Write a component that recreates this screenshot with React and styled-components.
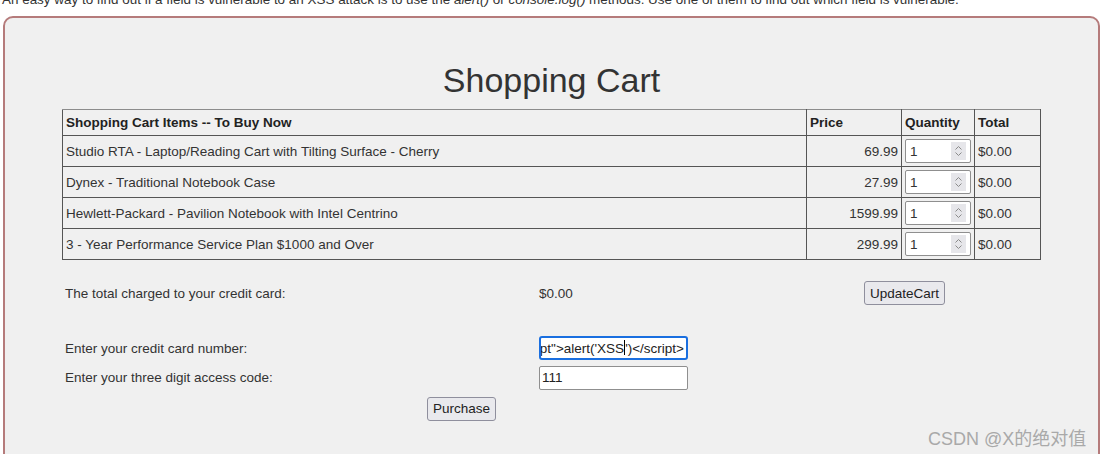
import React from "react";
import styled, { createGlobalStyle } from "styled-components";

const items = [
  { name: "Studio RTA - Laptop/Reading Cart with Tilting Surface - Cherry", price: "69.99" },
  { name: "Dynex - Traditional Notebook Case", price: "27.99" },
  { name: "Hewlett-Packard - Pavilion Notebook with Intel Centrino", price: "1599.99" },
  { name: "3 - Year Performance Service Plan $1000 and Over", price: "299.99" },
];

// spin buttons of a number input
const Spinner = () => (
  <SpinBox>
    <svg width="9" height="12" viewBox="0 0 9 12" fill="none" stroke="#8a8a8a" strokeWidth="1">
      <path d="M1.5 4.5 L4.5 1.5 L7.5 4.5" />
      <path d="M1.5 7.5 L4.5 10.5 L7.5 7.5" />
    </svg>
  </SpinBox>
);

const App = () => {
  return (
    <Page>
      <GlobalStyle />
      {/* Hint line, scrolled half out of view */}
      <Hint>
        An easy way to find out if a field is vulnerable to an XSS attack is to use the <em>alert()</em> or{" "}
        <em>console.log()</em> methods. Use one of them to find out which field is vulnerable.
      </Hint>

      <Panel>
        <Title>Shopping Cart</Title>

        <CartTable>
          <thead>
            <tr>
              <Th>Shopping Cart Items -- To Buy Now</Th>
              <Th>Price</Th>
              <Th>Quantity</Th>
              <Th>Total</Th>
            </tr>
          </thead>
          <tbody>
            {items.map((item) => (
              <tr key={item.name}>
                <Td>{item.name}</Td>
                <Td $align="right">{item.price}</Td>
                <Td>
                  <QtyInput>
                    <span>1</span>
                    <Spinner />
                  </QtyInput>
                </Td>
                <Td>$0.00</Td>
              </tr>
            ))}
          </tbody>
        </CartTable>

        <Form>
          <Label>The total charged to your credit card:</Label>
          <Label>$0.00</Label>
          <Cell>
            <Button>UpdateCart</Button>
          </Cell>

          <Spacer />

          <Label>Enter your credit card number:</Label>
          <Cell>
            <TextField $focused>
              <FieldText>
                pt"&gt;alert('XSS<Caret />')&lt;/script&gt;
              </FieldText>
            </TextField>
          </Cell>
          <Cell />

          <Label>Enter your three digit access code:</Label>
          <Cell>
            <TextField>
              <span>111</span>
            </TextField>
          </Cell>
          <Cell />

          <Centered>
            <Button>Purchase</Button>
          </Centered>
          <Cell />
        </Form>
      </Panel>

      <Watermark>CSDN @X的绝对值</Watermark>
    </Page>
  );
};

const GlobalStyle = createGlobalStyle`
  html, body {
    margin: 0;
    padding: 0;
    background: #ffffff;
    overflow: hidden;
  }
  body {
    font-family: "Liberation Sans", Arial, sans-serif;
    color: #333333;
  }
`;

const Page = styled.div`
  position: relative;
  width: 1100px;
  height: 454px;
  overflow: hidden;
`;

const Hint = styled.p`
  margin: -8px 0 0 2px;
  font-size: 13.45px;
  line-height: 15px;
  white-space: nowrap;
  color: #333;
`;

const Panel = styled.section`
  margin: 9px 0 0 3px;
  width: 1097px;
  height: 480px;
  box-sizing: border-box;
  border: 2px solid #b57b7b;
  border-radius: 10px;
  background: #f0f0f0;
  padding-top: 42px;
`;

const Title = styled.h1`
  margin: 0 0 9px;
  text-align: center;
  font-size: 34px;
  font-weight: normal;
  line-height: 40px;
  color: #333;
`;

const CartTable = styled.table`
  width: 979px;
  margin: 0 auto;
  border-collapse: collapse;
  border: 1px solid #8c8c8c;
  font-size: 13.5px;
  table-layout: fixed;
`;

const Th = styled.th`
  text-align: left;
  font-weight: bold;
  font-size: 13.5px;
  height: 25px;
  padding: 0 3px;
  border: 1px solid #555;
  border-top-color: #8c8c8c;
  color: #222;

  &:nth-child(1) { width: 737px; }
  &:nth-child(2) { width: 88px; }
  &:nth-child(3) { width: 66px; }
`;

const Td = styled.td`
  height: 30px;
  padding: 0 3px;
  border: 1px solid #555;
  text-align: ${(p) => p.$align || "left"};
  color: #333;
  white-space: nowrap;
`;

const QtyInput = styled.div`
  display: flex;
  align-items: center;
  justify-content: space-between;
  box-sizing: border-box;
  width: 66px;
  height: 24px;
  padding: 0 4px 0 4px;
  background: #fff;
  border: 1px solid #8f8f8f;
  border-radius: 2px;
  font-size: 13.5px;
`;

const SpinBox = styled.div`
  display: flex;
  align-items: center;
  justify-content: center;
  width: 15px;
  height: 18px;
  background: #e6e6ea;
`;

const Form = styled.div`
  display: grid;
  grid-template-columns: 474px 325px 180px;
  grid-template-rows: 28px 27px 28px 31px 31px;
  align-items: center;
  width: 979px;
  margin: 19px auto 0;
  font-size: 13.5px;
`;

const Cell = styled.div`
  padding: 0 3px;
  display: flex;
  align-items: center;
`;

const Label = styled(Cell)`
  color: #333;
`;

const Spacer = styled.div`
  grid-column: 1 / -1;
`;

const Centered = styled(Cell)`
  grid-column: 1 / 3;
  justify-content: center;
`;

const Button = styled.button`
  font-family: "Liberation Sans", Arial, sans-serif;
  font-size: 13.5px;
  color: #222;
  height: 24px;
  padding: 0 5px;
  background: #e9e9ed;
  border: 1px solid #8f8f9d;
  border-radius: 3px;
`;

const TextField = styled.div`
  display: flex;
  align-items: center;
  box-sizing: border-box;
  width: 149px;
  height: 24px;
  padding: 0 2px;
  overflow: hidden;
  background: #fff;
  border: ${(p) => (p.$focused ? "2px solid #1a6fe0" : "1px solid #8f8f8f")};
  border-radius: ${(p) => (p.$focused ? "3px" : "2px")};
  font-size: 13.5px;
  color: #222;
  justify-content: ${(p) => (p.$focused ? "flex-end" : "flex-start")};
`;

const FieldText = styled.span`
  white-space: nowrap;
`;

const Caret = styled.span`
  display: inline-block;
  width: 1px;
  height: 15px;
  margin: 0 0 -2px;
  background: #000;
`;

const Watermark = styled.div`
  position: absolute;
  left: 928px;
  top: 424px;
  font-family: "Liberation Sans", "Noto Sans CJK SC", sans-serif;
  font-size: 18px;
  color: #a9a9a9;
  white-space: nowrap;
`;

export default App;
